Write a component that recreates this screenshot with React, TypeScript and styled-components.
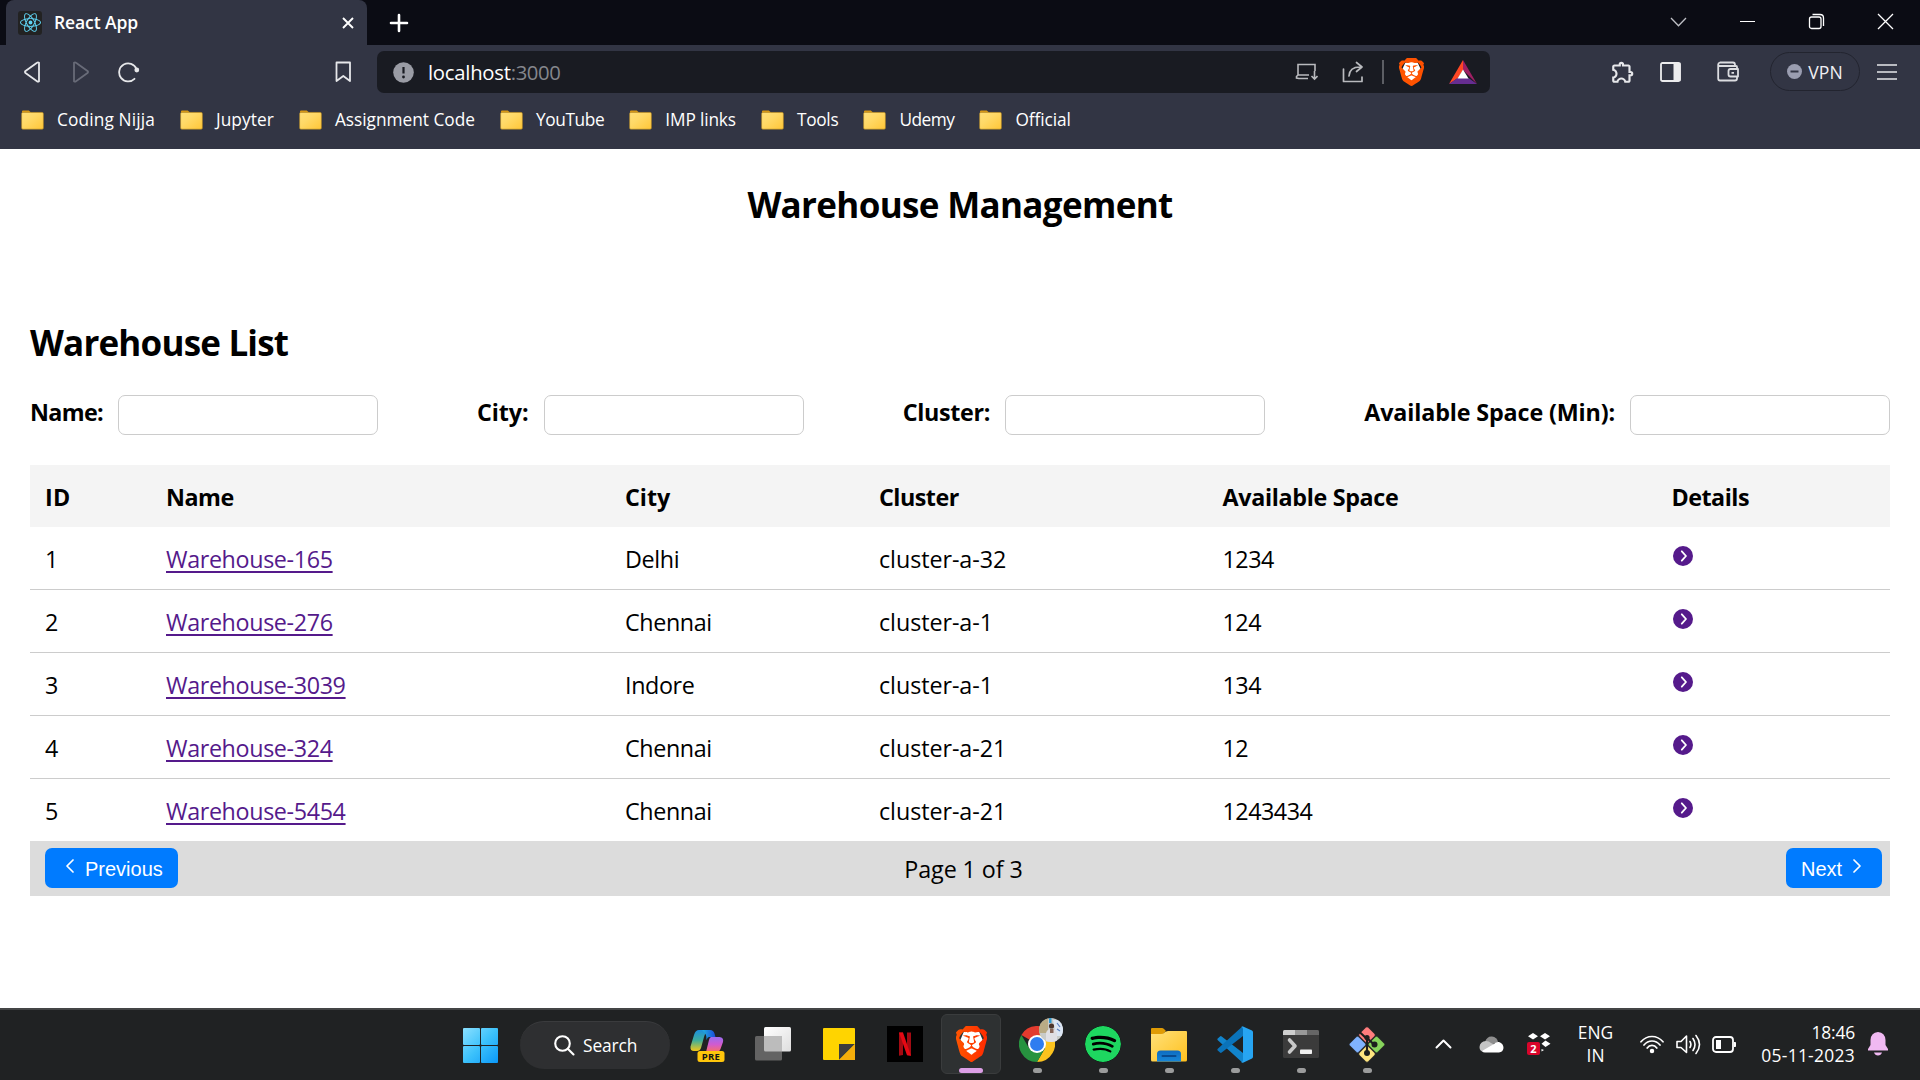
import React from 'react';
import styled, { createGlobalStyle } from 'styled-components';
import { SiBrave, SiSpotify, SiReact } from 'react-icons/si';
import { MdOutlineExtension } from 'react-icons/md';

const UI = "'Segoe UI', 'Open Sans', 'Noto Sans', sans-serif";

const Global = createGlobalStyle`
  * { box-sizing: border-box; }
  html, body { margin: 0; padding: 0; background: #fff; }
  body { width: 1920px; height: 1080px; overflow: hidden; font-family: ${UI}; }
  svg { display: block; flex: none; }
`;

const Screen = styled.div`
  width: 1920px;
  height: 1080px;
  display: flex;
  flex-direction: column;
`;

const Txt = styled.span<{ $ls?: number }>`
  white-space: nowrap;
  letter-spacing: ${p => p.$ls ?? 0}px;
`;

const TabStrip = styled.div`
  height: 45px;
  background: #0b0c14;
  display: flex;
  align-items: stretch;
  padding-left: 6px;
`;
const Tab = styled.div`
  width: 361px;
  background: #323544;
  border-radius: 8px 8px 0 0;
  display: flex;
  align-items: center;
  padding: 0 13px 0 12px;
  color: #fff;
`;
const TabTitle = styled(Txt)`
  font-size: 17.5px;
  font-weight: 600;
  padding-bottom: 2px;
`;
const Favicon = styled.div`
  width: 24px;
  height: 24px;
  border-radius: 3px;
  background: #222;
  margin-right: 12px;
  display: flex;
  align-items: center;
  justify-content: center;
`;
const Spacer = styled.div`flex: 1;`;
const NewTab = styled.div`
  margin-left: 22px;
  display: flex;
  align-items: center;
`;
const WindowControls = styled.div`
  display: flex;
  align-items: center;
  gap: 52px;
  padding: 0 26px 2px 0;
`;

const Toolbar = styled.div`
  height: 55px;
  background: #323544;
  display: flex;
  align-items: center;
  color: #e6e7ea;
  padding: 0 23px 2px 23px;
`;
const NavGroup = styled.div`
  width: 354px;
  display: flex;
  align-items: center;
`;
const NavIcon = styled.div<{ $left?: number }>`
  margin-left: ${p => p.$left ?? 0}px;
`;
const AddressBar = styled.div`
  width: 1113px;
  height: 42px;
  margin-top: 1px;
  border-radius: 7px;
  background: #191b22;
  display: flex;
  align-items: center;
  padding: 0 13px 0 16px;
  font-size: 20.3px;
  color: #fff;
`;
const Port = styled(Txt)`color: #85878d;`;
const UrlText = styled.div`
  margin-left: 14px;
  display: flex;
`;
const Divider = styled.div`
  width: 2px;
  height: 24px;
  background: #5c5e64;
  margin: 0 15px 0 17px;
`;
const VpnPill = styled.div`
  width: 90px;
  height: 39px;
  margin: 0 17px 0 31px;
  border: 1.5px solid #22242f;
  border-radius: 20px;
  display: flex;
  align-items: center;
  justify-content: center;
  gap: 6px;
  font-size: 17.6px;
  color: #f0f0f4;
`;
const Bookmarks = styled.div`
  height: 49px;
  background: #323544;
  display: flex;
  padding: 0 0 9px 21px;
  color: #fff;
  font-size: 17.3px;
`;
const Bookmark = styled.div`
  display: flex;
  align-items: center;
  gap: 13px;
  margin-right: 25px;
`;
const BookmarkLabel = styled(Txt)`padding-bottom: 1px;`;

const Page = styled.main`
  height: 859px;
  background: #fff;
  padding: 0 30px;
  color: #000;
  font-size: 23.3px;
`;
const Title = styled.h1`
  margin: 0;
  padding-top: 32px;
  height: 169px;
  line-height: 48px;
  font-size: 35px;
  font-weight: 700;
  text-align: center;
`;
const ListTitle = styled.h2`
  margin: 0;
  height: 77px;
  line-height: 50px;
  font-size: 35px;
  font-weight: 700;
`;
const Filters = styled.div`
  display: flex;
  justify-content: space-between;
  height: 70px;
`;
const Field = styled.label`
  display: flex;
  gap: 15px;
  font-weight: 700;
  line-height: 35px;
`;
const Input = styled.input`
  width: 260px;
  height: 40px;
  border: 1px solid #ccc;
  border-radius: 7px;
  background: #fff;
  outline: none;
`;
const Row = styled.div<{ $last?: boolean }>`
  display: grid;
  grid-template-columns: 121px 459px 254px 343.5px 449px 1fr;
  height: ${p => (p.$last ? 62 : 63)}px;
  align-items: center;
  border-bottom: ${p => (p.$last ? 'none' : '1px solid #ccc')};
  line-height: 32px;
`;
const HeadRow = styled(Row)`
  height: 62px;
  border: none;
  background: #f4f4f4;
  font-weight: 700;
`;
const Cell = styled.div`padding: 2px 0 0 15px;`;
const IconCell = styled.div`padding: 0 0 5px 16px;`;
const NameLink = styled.a`
  color: #551a8b;
  text-decoration: underline;
  text-decoration-thickness: 2px;
  text-underline-offset: 3px;
  text-decoration-skip-ink: none;
`;
const Pager = styled.div`
  height: 55px;
  background: #dcdcdc;
  display: grid;
  grid-template-columns: 1fr auto 1fr;
  align-items: center;
  padding: 0 8px 1px 15px;
`;
const PageLabel = styled(Txt)`padding-top: 2px;`;
const PagerButton = styled.button<{ $width: number; $end?: boolean }>`
  width: ${p => p.$width}px;
  height: 40px;
  justify-self: ${p => (p.$end ? 'end' : 'start')};
  border: 0;
  border-radius: 7px;
  background: #007bff;
  color: #fff;
  font: 20px 'Liberation Sans', Arial, sans-serif;
  display: flex;
  align-items: center;
  padding: 2px 15px 0;
`;
const Chevron = styled.span<{ $side: 'left' | 'right' }>`
  padding: ${p => (p.$side === 'left' ? '0 11px 6px 6px' : '0 0 6px 11px')};
`;

const Taskbar = styled.footer`
  height: 72px;
  background: #202223;
  border-top: 2px solid #444546;
  display: flex;
  color: #fff;
  font-size: 17.4px;
`;
const Launcher = styled.div`
  display: flex;
  align-items: center;
  padding-left: 463px;
`;
const SearchBox = styled.div`
  width: 150px;
  height: 48px;
  margin: 0 4px 1px 22px;
  border-radius: 24px;
  background: #2e2f31;
  border-top: 1px solid #3a3b3d;
  display: flex;
  align-items: center;
  padding-left: 34px;
  gap: 8px;
`;
const AppSlot = styled.div<{ $active?: boolean }>`
  width: 60px;
  height: 60px;
  margin: 0 3px 2px;
  border-radius: 6px;
  background: ${p => (p.$active ? '#2e3132' : 'transparent')};
  border: 1px solid ${p => (p.$active ? '#3a3c3d' : 'transparent')};
  display: flex;
  flex-direction: column;
  align-items: center;
  justify-content: space-between;
  padding-top: 11px;
`;
const Indicator = styled.div<{ $kind?: 'dot' | 'bar' }>`
  width: ${p => (p.$kind === 'bar' ? 24 : 9)}px;
  height: 5px;
  border-radius: 3px;
  background: ${p => (p.$kind === 'bar' ? '#dc9fe6' : '#9b9c9c')};
`;
const Tray = styled.div`
  flex: 1;
  display: flex;
  align-items: center;
  padding: 0 32px 2px 0;
  justify-content: flex-end;
`;
const TrayText = styled.div<{ $align: 'center' | 'right'; $ml: number; $mr: number }>`
  display: flex;
  flex-direction: column;
  align-items: ${p => (p.$align === 'right' ? 'flex-end' : 'center')};
  line-height: 23.5px;
  margin: 0 ${p => p.$mr}px 0 ${p => p.$ml}px;
`;
const TrayIcon = styled.div<{ $ml: number }>`
  margin-left: ${p => p.$ml}px;
`;

const Stack = styled.div`
  position: relative;
  display: flex;
`;
const Over = styled.div`
  position: absolute;
  inset: 0;
`;
const Avatar = styled.div`
  position: absolute;
  left: 20px;
  top: -8px;
`;
const Badge = styled.div`
  position: absolute;
  left: 0;
  top: 9px;
  width: 13px;
  height: 13px;
  border-radius: 2px;
  background: #d9052b;
  color: #fff;
  font: 700 11px/13px 'Open Sans', sans-serif;
  text-align: center;
`;

const Folder = () => (
  <svg width="23" height="20" viewBox="0 0 23 20">
    <defs>
      <linearGradient id="fold" x1="0" y1="0" x2="1" y2="1">
        <stop offset="0" stopColor="#ffe07a" /><stop offset="0.4" stopColor="#ffd967" /><stop offset="1" stopColor="#ffc637" />
      </linearGradient>
    </defs>
    <path d="M1 5V1.6Q1 .6 2 .6H7.8L10 2.6H21.5V8H1Z" fill="#d99a16" />
    <rect x=".6" y="2.4" width="21.8" height="16.8" rx="1.3" fill="url(#fold)" stroke="#a98224" strokeWidth=".6" />
  </svg>
);

const BraveLogo = ({ w, h, id }: { w: number; h: number; id: string }) => (
  <Stack>
    <svg width={w} height={h} viewBox="0 0 24 24" preserveAspectRatio="none">
      <path d="M6 4L12 3L18 4L20.5 9L17 18L12 22L7 18L3.5 9Z" fill="#fff" />
    </svg>
    <Over>
      <svg width={w} height={h} viewBox="2 0 20 24" preserveAspectRatio="none">
        <defs>
          <linearGradient id={id}><stop offset="0" stopColor="#ff5500" /><stop offset="1" stopColor={id === 'braveBig' ? '#ff2a00' : '#ff5000'} /></linearGradient>
        </defs>
        <SiBrave size={24} fill={`url(#${id})`} />
      </svg>
    </Over>
  </Stack>
);

const Winlogo = () => (
  <svg width="35" height="35" viewBox="0 0 35 35">
    <defs><linearGradient id="win" x1="0" y1="0" x2="35" y2="35" gradientUnits="userSpaceOnUse">
      <stop offset="0" stopColor="#8be0ff" /><stop offset=".5" stopColor="#3dc2fb" /><stop offset="1" stopColor="#0a98f8" /></linearGradient></defs>
    <g fill="url(#win)">
      <rect width="17" height="17" rx="1" /><rect x="18" width="17" height="17" rx="1" />
      <rect y="18" width="17" height="17" rx="1" /><rect x="18" y="18" width="17" height="17" rx="1" />
    </g>
  </svg>
);

const Copilot = () => (
  <svg width="36" height="36" viewBox="0 0 36 36">
    <defs>
      <linearGradient id="cpA" x1="0" y1="0" x2="0" y2="1"><stop offset="0" stopColor="#1b8fe0" /><stop offset=".5" stopColor="#3fae9a" /><stop offset="1" stopColor="#f2c717" /></linearGradient>
      <linearGradient id="cpB" x1="0" y1="0" x2="0" y2="1"><stop offset="0" stopColor="#9a6cf0" /><stop offset=".5" stopColor="#d15bd0" /><stop offset="1" stopColor="#fb6f62" /></linearGradient>
      <linearGradient id="cpC"><stop offset="0" stopColor="#1fb4e4" /><stop offset="1" stopColor="#1c49d8" /></linearGradient>
    </defs>
    <path d="M10 4H20Q16.500 5 15 11L12 22Q11 25 8 25H5Q1 25 1.500 20.500L5 9Q6.500 4 10 4Z" fill="url(#cpA)" />
    <path d="M13 4H21Q24.500 4 25.500 7.500L26.500 11H20Q18.500 11 17.500 14Q18 8 13 4Z" fill="url(#cpC)" />
    <path d="M22 11H30.500Q35 11.500 34 16L31.500 23Q30.500 26 27 26H17L20 14Q20.500 11.500 22 11Z" fill="url(#cpB)" />
    <rect x="8.500" y="25" width="27" height="11" rx="2.500" fill="#ffc60b" />
    <text x="22" y="34" textAnchor="middle" fontFamily="Open Sans, sans-serif" fontWeight="700" fontSize="9.500" fill="#151515" letterSpacing=".3">PRE</text>
  </svg>
);

const TaskView = () => (
  <svg width="36" height="36" viewBox="0 0 36 36">
    <defs><linearGradient id="tv" x1="0" y1="0" x2="1" y2="1"><stop offset="0" stopColor="#fff" /><stop offset="1" stopColor="#dedede" /></linearGradient></defs>
    <rect x="9" y="1" width="27" height="24.500" rx="1.500" fill="url(#tv)" />
    <rect y="10" width="27" height="24.500" rx="1.500" fill="#636363" />
    <path d="M9 10H27V25.500H10.500Q9 25.500 9 24Z" fill="#bcbcbc" />
  </svg>
);

const Sticky = () => (
  <svg width="32" height="36" viewBox="0 0 32 36">
    <rect y="2" width="32" height="32" rx="1" fill="#ffd400" />
    <path d="M16 34V18H32Z" fill="#3d3d3d" />
    <path d="M32 18V34H16Z" fill="#f5ae0b" />
  </svg>
);

const Netflix = () => (
  <svg width="36" height="36" viewBox="0 0 36 36">
    <rect width="36" height="36" fill="#000" />
    <path d="M12 6.500H16V29L12 29.800ZM20 6.500H24V29.800L20 29Z" fill="#a30a12" />
    <path d="M12 6.500H16L24 29.800L20 29.300Z" fill="#e50914" />
  </svg>
);

const Chrome = () => (
  <Stack>
    <svg width="36" height="36" viewBox="0 0 36 36">
      <path d="M18 18L2.400 9A18 18 0 0 1 33.600 9H18Z" fill="#e33b2e" />
      <path d="M18 9H33.600A18 18 0 0 1 18 36L25.800 22.500Z" fill="#fcc31e" />
      <path d="M25.800 22.500L18 36A18 18 0 0 1 2.400 9L10.200 22.500Z" fill="#27933f" />
      <circle cx="18" cy="18" r="9" fill="#fff" />
      <circle cx="18" cy="18" r="7" fill="#2f7df0" />
    </svg>
    <Avatar>
      <svg width="24" height="24" viewBox="0 0 24 24">
        <defs><clipPath id="av"><circle cx="12" cy="12" r="12" /></clipPath></defs>
        <g clipPath="url(#av)">
          <rect width="24" height="24" fill="#c9cbc9" />
          <path d="M0 0H9V15H0Z" fill="#b9ab85" />
          <path d="M14 2H24V18H17Z" fill="#dce6f4" /><path d="M18 5l3 4M18 11l3 2" stroke="#5e83c4" strokeWidth="1.200" />
          <rect x="10" width="2.500" height="5" fill="#2d9bd4" />
          <path d="M7 24V15Q8 11 12.500 11Q17 11 18 15V24Z" fill="#e0dfe4" />
          <circle cx="12.500" cy="8" r="2.600" fill="#4b352d" />
          <path d="M11 11h3.500v4h-3.500z" fill="#87665a" />
        </g>
      </svg>
    </Avatar>
  </Stack>
);

const Spotify = styled(SiSpotify)`
  background: #000;
  border-radius: 50%;
  color: #1ed760;
`;

const Explorer = () => (
  <svg width="36" height="36" viewBox="0 0 36 36">
    <defs>
      <linearGradient id="ex" x1="0" y1="0" x2="1" y2="1"><stop offset="0" stopColor="#ffe17a" /><stop offset="1" stopColor="#ffc01e" /></linearGradient>
      <linearGradient id="eb" x1="0" y1="0" x2="0" y2="1"><stop offset="0" stopColor="#0e6bc0" /><stop offset="1" stopColor="#1787d8" /></linearGradient>
    </defs>
    <path d="M0 8V3Q0 2 1 2H11Q12 2 13 3L15 5L12 8Z" fill="#df9b05" />
    <path d="M0 8H10Q12 8 13.500 6.500Q15 5 17 5H35Q36 5 36 6V34Q36 35.500 34.500 35.500H1.500Q0 35.500 0 34Z" fill="url(#ex)" />
    <path d="M6 35.500V28Q6 24.500 9.500 24.500H26.500Q30 24.500 30 28V35.500Z" fill="url(#eb)" />
    <path d="M11.500 30H24.500" stroke="#084a8f" strokeWidth="2" strokeLinecap="round" />
  </svg>
);

const VSCode = () => (
  <svg width="36" height="37" viewBox="0 0 36 37">
    <path d="M1 12.200L3 10.400Q3.800 9.800 4.700 10.500L26 27V36.500Q25.200 36.500 24.500 35.800L.8 14.200Q-.2 13.200 1 12.200Z" fill="#1184cc" />
    <path d="M1 24.800L3 26.600Q3.800 27.200 4.700 26.500L26 10V.5Q25.200 .5 24.500 1.200L.8 22.800Q-.2 23.800 1 24.800Z" fill="#0a73ba" />
    <path d="M26 .5L35 4.600Q36 5.200 36 6.300V30.700Q36 31.800 35 32.400L26 36.700Q24.800 36.700 24 36Q26 36 26 34V3Q26 1 24 1Q24.800 .3 26 .5Z" fill="#27a5f2" />
  </svg>
);

const Terminal = () => (
  <svg width="36" height="36" viewBox="0 0 36 36">
    <rect y="4" width="36" height="28" rx="1.500" fill="#3b3b3b" />
    <path d="M0 9V5.500Q0 4 1.500 4H12V9Z" fill="#cfcfcf" /><path d="M12 4H24V9H12Z" fill="#999" />
    <path d="M24 4H34.500Q36 4 36 5.500V9H24Z" fill="#666" />
    <path d="M6.500 14L12 20L6.500 26" fill="none" stroke="#c9c9c9" strokeWidth="3.600" strokeLinecap="round" strokeLinejoin="round" />
    <rect x="17" y="23.500" width="12" height="4.500" rx=".8" fill="#f0f0f0" />
  </svg>
);

const Git = () => (
  <svg width="36" height="37" viewBox="0 0 36 37">
    <g stroke="#202223" strokeWidth=".6">
      <rect x="11.750" y="2.750" width="12.500" height="12.500" rx="1.500" transform="rotate(45 18 9)" fill="#ff7d7d" />
      <rect x="21.250" y="12.250" width="12.500" height="12.500" rx="1.500" transform="rotate(45 27.500 18.500)" fill="#87d45c" />
      <rect x="2.250" y="12.250" width="12.500" height="12.500" rx="1.500" transform="rotate(45 8.500 18.500)" fill="#80b3ff" />
      <rect x="11.750" y="21.750" width="12.500" height="12.500" rx="1.500" transform="rotate(45 18 28)" fill="#ffe680" />
    </g>
    <path d="M10.500 6L18 13V27M18 12L25 18.500" stroke="#1d1f1e" strokeWidth="2.200" fill="none" />
    <g fill="#1d1f1e"><circle cx="18" cy="11.500" r="2.600" /><circle cx="25.500" cy="18.500" r="3" /><circle cx="18" cy="27" r="3" /></g>
  </svg>
);

const Wifi = () => (
  <svg width="24" height="19" viewBox="0 0 24 19" fill="none" stroke="#fff" strokeWidth="1.700" strokeLinecap="round">
    <path d="M1 6.800Q5.500 1.500 12 1.500T23 6.800M4 10Q7.300 6 12 6T20 10M7.200 13Q9 10.400 12 10.400T16.800 13" />
    <circle cx="12" cy="16" r="1.400" fill="#fff" />
  </svg>
);
const Speaker = () => (
  <svg width="25" height="21" viewBox="0 0 25 21" fill="none" stroke="#fff" strokeWidth="1.600" strokeLinecap="round" strokeLinejoin="round">
    <path d="M1 7.500H5L10.500 2V18.500L5 13.500H1Z" /><path d="M14 7.500Q15.800 10.500 14 13.500M17 4.500Q21 10.500 17 16.500M20 1.500Q27 10.500 20 19.500" />
  </svg>
);
const Battery = () => (
  <svg width="25" height="17" viewBox="0 0 25 17" fill="none" stroke="#fff" strokeWidth="1.800">
    <rect x="1" y="1" width="20" height="15" rx="3" /><rect x="4" y="4" width="5" height="9" fill="#fff" stroke="none" />
    <path d="M22 6.500H23.500V10.500H22" fill="#fff" strokeWidth="1" />
  </svg>
);
const Dropbox = () => (
  <svg width="24" height="22" viewBox="0 0 24 22" fill="#fff">
    <path d="M6 0L11 3.200L6 6.400L1 3.200ZM18 0L23 3.200L18 6.400L13 3.200ZM18.500 7.500L23.500 10.700L18.500 13.900L14.500 10.700ZM14.500 16L17 17L14.500 18.500Z" />
  </svg>
);

const bookmarks: [string, number][] = [
  ['Coding Nijja', 0.13], ['Jupyter', 0.08], ['Assignment Code', -0.02], ['YouTube', -0.37],
  ['IMP links', -0.15], ['Tools', -0.28], ['Udemy', -0.5], ['Official', -0.1],
];

const fields: [string, number][] = [
  ['Name:', -0.66], ['City:', -0.1], ['Cluster:', -0.31], ['Available Space (Min):', -0.13],
];

const columns: [string, number][] = [
  ['ID', 0.3], ['Name', -0.5], ['City', 0], ['Cluster', -0.5], ['Available Space', -0.32], ['Details', -0.5],
];

const rows = [
  { id: 1, name: 'Warehouse-165', city: 'Delhi', cluster: 'cluster-a-32', space: '1234' },
  { id: 2, name: 'Warehouse-276', city: 'Chennai', cluster: 'cluster-a-1', space: '124' },
  { id: 3, name: 'Warehouse-3039', city: 'Indore', cluster: 'cluster-a-1', space: '134' },
  { id: 4, name: 'Warehouse-324', city: 'Chennai', cluster: 'cluster-a-21', space: '12' },
  { id: 5, name: 'Warehouse-5454', city: 'Chennai', cluster: 'cluster-a-21', space: '1243434' },
];

export default function App() {
  return (
    <Screen>
      <Global />
      <TabStrip>
        <Tab>
          <Favicon><SiReact size={21} color="#5fd3f3" /></Favicon>
          <TabTitle $ls={-0.1}>React App</TabTitle>
          <Spacer />
          <svg width="12" height="12" viewBox="0 0 12 12" stroke="#fff" strokeWidth="1.900"><path d="M1 1L11 11M11 1L1 11" /></svg>
        </Tab>
        <NewTab><svg width="20" height="20" viewBox="0 0 20 20" stroke="#fff" strokeWidth="2.600" strokeLinecap="round"><path d="M10 2V18M2 10H18" /></svg></NewTab>
        <Spacer />
        <WindowControls>
          <svg width="17" height="10" viewBox="0 0 17 10" fill="none" stroke="#bfc0c6" strokeWidth="1.300"><path d="M1 1L8.500 8.800L16 1" /></svg>
          <svg width="17" height="3" viewBox="0 0 17 3"><rect x="1" y="1" width="15" height="1" fill="#fff" /></svg>
          <svg width="17" height="17" viewBox="0 0 17 17" fill="none" stroke="#fff" strokeWidth="1.300"><rect x="1.500" y="4" width="11.500" height="11.500" rx="2" /><path d="M4.500 1.500H12Q15.500 1.500 15.500 5V13" /></svg>
          <svg width="17" height="17" viewBox="0 0 17 17" stroke="#fff" strokeWidth="1.300"><path d="M1 1L16 16M16 1L1 16" /></svg>
        </WindowControls>
      </TabStrip>
      <Toolbar>
        <NavGroup>
          <svg width="18" height="22" viewBox="0 0 18 22" fill="none" stroke="#e6e7ea" strokeWidth="1.800" strokeLinejoin="round"><path d="M16 1.800V20.200Q15 21 14 20.200L2.500 12Q1.500 11 2.500 10L14 1.800Q15 1 16 1.800Z" /></svg>
          <NavIcon $left={31}><svg width="18" height="22" viewBox="0 0 18 22" fill="none" stroke="#686b78" strokeWidth="1.800" strokeLinejoin="round"><path d="M2 1.800V20.200Q3 21 4 20.200L15.500 12Q16.500 11 15.500 10L4 1.800Q3 1 2 1.800Z" /></svg></NavIcon>
          <NavIcon $left={28}><svg width="22" height="22" viewBox="0 0 22 22" fill="none" stroke="#e6e7ea" strokeWidth="1.800" strokeLinecap="round"><path d="M16.500 17.800A9 9 0 1 1 18.500 8" /><circle cx="18.800" cy="9" r="2.400" fill="#e6e7ea" stroke="none" /></svg></NavIcon>
          <NavIcon $left={195}><svg width="17" height="22" viewBox="0 0 17 22" fill="none" stroke="#e6e7ea" strokeWidth="1.800" strokeLinejoin="round"><path d="M1.500 1.500H15V20L8.300 15L1.500 20Z" /></svg></NavIcon>
        </NavGroup>
        <AddressBar>
          <svg width="21" height="21" viewBox="0 0 21 21"><circle cx="10.500" cy="10.500" r="10.300" fill="#9a9ca5" /><path d="M10.500 5V11.500" stroke="#191b22" strokeWidth="2.200" /><circle cx="10.500" cy="15" r="1.400" fill="#191b22" /></svg>
          <UrlText><Txt $ls={-0.25}>localhost</Txt><Port $ls={-0.4}>:3000</Port></UrlText>
          <Spacer />
          <svg width="23" height="18" viewBox="0 0 23 18" fill="none" stroke="#b9babe" strokeWidth="1.600"><path d="M13 15.500H4L1.500 15V13.500L3 12V1.500H20V8M3 12H14M19.500 8V16M16.500 13L19.500 16L22.500 13" /></svg>
          <NavIcon $left={24}><svg width="23" height="22" viewBox="0 0 23 22" fill="none" stroke="#b9babe" strokeWidth="1.700" strokeLinejoin="round" strokeLinecap="round"><path d="M1.500 8V20.500H20V16M7 15Q7.500 6 18 6M14.500 1.500L20 6L14.500 10.500" /></svg></NavIcon>
          <Divider />
          <BraveLogo w={25} h={28} id="braveSmall" />
          <NavIcon $left={25}><svg width="28" height="24" viewBox="0 0 28 24"><path d="M14 0L28 24L14 10Z" fill="#9e1f63" /><path d="M14 0L0 24L9 18L14 10Z" fill="#ff4724" /><path d="M0 24H28L19.500 18H8.500Z" fill="#662d91" /><path d="M14 9.500L19.500 18.500H8.500Z" fill="#fff" /></svg></NavIcon>
        </AddressBar>
        <Spacer />
        <MdOutlineExtension size={26} />
        <NavIcon $left={24}><svg width="21" height="20" viewBox="0 0 21 20"><rect x="1" y="1" width="19" height="18" rx="1.500" fill="none" stroke="#ececee" strokeWidth="1.800" /><rect x="13.500" y="1" width="7" height="18" fill="#ececee" /></svg></NavIcon>
        <NavIcon $left={36}><svg width="22" height="21" viewBox="0 0 22 21" fill="none" stroke="#dcdde1" strokeWidth="1.800" strokeLinejoin="round"><path d="M20 8V6Q20 5 19 5H3Q1.200 5 1.200 3.500T3 1.500H16Q18 1.500 18 4M1.200 3.500V17.500Q1.200 19.500 3 19.500H18Q20 19.500 20 17.500V15.500M21 8H13.500Q11.500 8 11.500 10V13.500Q11.500 15.500 13.500 15.500H21ZM14.500 11.800H17" /></svg></NavIcon>
        <VpnPill>
          <svg width="15" height="15" viewBox="0 0 15 15"><circle cx="7.500" cy="7.500" r="7.500" fill="#9a9db0" /><path d="M3.500 7.500H11.500" stroke="#323544" strokeWidth="2" /></svg>
          <Txt $ls={0.1}>VPN</Txt>
        </VpnPill>
        <svg width="20" height="18" viewBox="0 0 20 18" stroke="#e6e7ea" strokeWidth="1.700"><path d="M0 2H20M0 9H20M0 16H20" /></svg>
      </Toolbar>
      <Bookmarks>
        {bookmarks.map(([name, ls]) => (
          <Bookmark key={name}><Folder /><BookmarkLabel $ls={ls}>{name}</BookmarkLabel></Bookmark>
        ))}
      </Bookmarks>
      <Page>
        <Title><Txt $ls={-0.66}>Warehouse Management</Txt></Title>
        <ListTitle><Txt $ls={-0.8}>Warehouse List</Txt></ListTitle>
        <Filters>
          {fields.map(([label, ls]) => <Field key={label}><Txt $ls={ls}>{label}</Txt><Input /></Field>)}
        </Filters>
        <HeadRow>
          {columns.map(([label, ls]) => <Cell key={label}><Txt $ls={ls}>{label}</Txt></Cell>)}
        </HeadRow>
        {rows.map(r => (
          <Row key={r.id} $last={r.id === rows.length}>
            <Cell>{r.id}</Cell>
            <Cell><NameLink><Txt $ls={-0.36}>{r.name}</Txt></NameLink></Cell>
            <Cell><Txt $ls={-0.38}>{r.city}</Txt></Cell>
            <Cell><Txt $ls={-0.06}>{r.cluster}</Txt></Cell>
            <Cell><Txt $ls={-0.48}>{r.space}</Txt></Cell>
            <IconCell>
              <svg width="20" height="20" viewBox="0 0 20 20"><circle cx="10" cy="10" r="10" fill="#551a8b" /><path d="M8.800 5.300L13 10L8.800 14.700" fill="none" stroke="#fff" strokeWidth="1.800" strokeLinecap="round" strokeLinejoin="round" /></svg>
            </IconCell>
          </Row>
        ))}
        <Pager>
          <PagerButton $width={133}>
            <Chevron $side="left"><svg width="8" height="14" viewBox="0 0 8 14" fill="none" stroke="#fff" strokeWidth="1.700" strokeLinecap="round" strokeLinejoin="round"><path d="M7 1L1 7L7 13" /></svg></Chevron>
            Previous
          </PagerButton>
          <PageLabel $ls={-0.08}>Page 1 of 3</PageLabel>
          <PagerButton $width={96} $end>
            Next
            <Chevron $side="right"><svg width="8" height="14" viewBox="0 0 8 14" fill="none" stroke="#fff" strokeWidth="1.700" strokeLinecap="round" strokeLinejoin="round"><path d="M1 1L7 7L1 13" /></svg></Chevron>
          </PagerButton>
        </Pager>
      </Page>
      <Taskbar>
        <Launcher>
          <Winlogo />
          <SearchBox>
            <svg width="21" height="21" viewBox="0 0 21 21" fill="none" stroke="#fff" strokeWidth="2.100" strokeLinecap="round"><circle cx="8.500" cy="8.500" r="7.300" /><path d="M13.800 13.800L19.500 19.500" /></svg>
            <Txt $ls={-0.15}>Search</Txt>
          </SearchBox>
          <AppSlot><Copilot /></AppSlot>
          <AppSlot><TaskView /></AppSlot>
          <AppSlot><Sticky /></AppSlot>
          <AppSlot><Netflix /></AppSlot>
          <AppSlot $active><BraveLogo w={31} h={36} id="braveBig" /><Indicator $kind="bar" /></AppSlot>
          <AppSlot><Chrome /><Indicator $kind="dot" /></AppSlot>
          <AppSlot><Spotify size={36} /><Indicator $kind="dot" /></AppSlot>
          <AppSlot><Explorer /><Indicator $kind="dot" /></AppSlot>
          <AppSlot><VSCode /><Indicator $kind="dot" /></AppSlot>
          <AppSlot><Terminal /><Indicator $kind="dot" /></AppSlot>
          <AppSlot><Git /><Indicator $kind="dot" /></AppSlot>
        </Launcher>
        <Tray>
          <svg width="17" height="10" viewBox="0 0 17 10" fill="none" stroke="#fff" strokeWidth="2" strokeLinecap="round" strokeLinejoin="round"><path d="M1.500 8.500L8.500 1.500L15.500 8.500" /></svg>
          <TrayIcon $ml={27}><svg width="25" height="17" viewBox="0 0 25 17"><path d="M6 6Q8 0 13 .5Q18 1 19 6L12 9Z" fill="#8e8e8e" /><path d="M5 16Q.5 15.500 .5 11Q1 5.500 7 5Q10 5 12 7L18 10L8 16Z" fill="#c4c4c4" /><path d="M3 15Q8 12 15 8Q17 5.500 20 6Q24.500 7.500 24.500 12Q24 16 20 16.500H6Q4 16.500 3 15Z" fill="#fff" /></svg></TrayIcon>
          <TrayIcon $ml={23}>
            <Stack>
              <Dropbox />
              <Badge>2</Badge>
            </Stack>
          </TrayIcon>
          <TrayText $align="center" $ml={27} $mr={27}><Txt>ENG</Txt><Txt>IN</Txt></TrayText>
          <Wifi />
          <TrayIcon $ml={12}><Speaker /></TrayIcon>
          <TrayIcon $ml={11}><Battery /></TrayIcon>
          <TrayText $align="right" $ml={24} $mr={13}><Txt $ls={-0.15}>18:46</Txt><Txt $ls={0.3}>05-11-2023</Txt></TrayText>
          <svg width="20" height="24" viewBox="0 0 20 24"><path d="M10 0Q17 .5 17.500 8V13L20 17V18.500H0V17L2.500 13V8Q3 .5 10 0ZM6 20.500H14Q13 23.500 10 23.500T6 20.500Z" fill="#f0b9f2" /></svg>
        </Tray>
      </Taskbar>
    </Screen>
  );
}
